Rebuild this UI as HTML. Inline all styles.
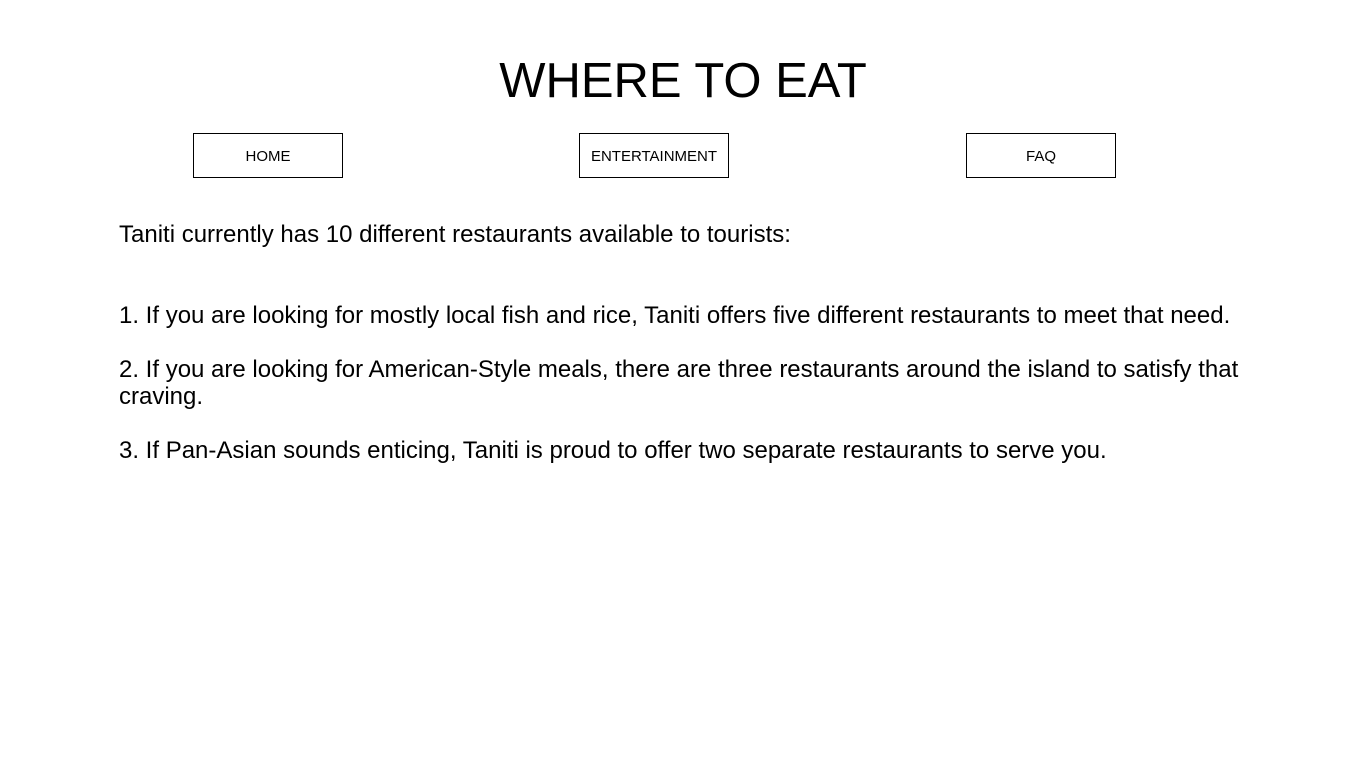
<!DOCTYPE html>
<html><head><style>
body{margin:0;background:#fff;font-family:"Liberation Sans",Arial,sans-serif;color:#000;width:1366px;height:768px;overflow:hidden;position:relative}
h1{position:absolute;top:53px;left:0;width:1366px;text-align:center;font-size:49px;font-weight:normal;margin:0;line-height:56px}
.btn{position:absolute;top:133px;width:148px;height:43px;border:1px solid #000;font-size:15px;text-align:center;line-height:45px}
p{position:absolute;left:119px;margin:0;font-size:24px;line-height:27px;width:1140px}
</style></head><body>
<h1>WHERE TO EAT</h1>
<div class="btn" style="left:193px">HOME</div>
<div class="btn" style="left:579px">ENTERTAINMENT</div>
<div class="btn" style="left:966px">FAQ</div>
<p style="top:221px">Taniti currently has 10 different restaurants available to tourists:</p>
<p style="top:302px">1. If you are looking for mostly local fish and rice, Taniti offers five different restaurants to meet that need.</p>
<p style="top:356px">2. If you are looking for American-Style meals, there are three restaurants around the island to satisfy that craving.</p>
<p style="top:437px">3. If Pan-Asian sounds enticing, Taniti is proud to offer two separate restaurants to serve you.</p>
</body></html>
